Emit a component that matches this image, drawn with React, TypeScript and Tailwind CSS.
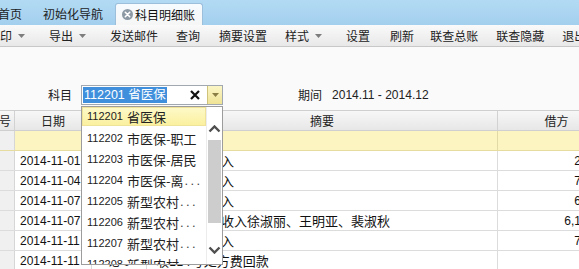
import React from "react";

const toolItems: { t: string; ml: string; arrow?: boolean }[] = [
  { t: "打印", ml: "ml-[-12px]", arrow: true },
  { t: "导出", ml: "ml-[24px]", arrow: true },
  { t: "发送邮件", ml: "ml-[24px]" },
  { t: "查询", ml: "ml-[18px]" },
  { t: "摘要设置", ml: "ml-[19px]" },
  { t: "样式", ml: "ml-[18px]", arrow: true },
  { t: "设置", ml: "ml-[24px]" },
  { t: "刷新", ml: "ml-[20px]" },
  { t: "联查总账", ml: "ml-[16px]" },
  { t: "联查隐藏", ml: "ml-[18px]" },
  { t: "退出", ml: "ml-[18px]" },
];

const listItems: { code: string; name: string; dots?: boolean }[] = [
  { code: "112201", name: "省医保" },
  { code: "112202", name: "市医保-职工" },
  { code: "112203", name: "市医保-居民" },
  { code: "112204", name: "市医保-离", dots: true },
  { code: "112205", name: "新型农村", dots: true },
  { code: "112206", name: "新型农村", dots: true },
  { code: "112207", name: "新型农村", dots: true },
  { code: "112208", name: "新型农村", dots: true },
];

const rows: { date: string; no: string; text: string; amt: string }[] = [
  { date: "2014-11-01", no: "记-1", text: "收到医保收入", amt: "210.00" },
  { date: "2014-11-04", no: "记-3", text: "收到医保收入", amt: "750.00" },
  { date: "2014-11-07", no: "记-5", text: "收到医保收入", amt: "630.00" },
  { date: "2014-11-07", no: "记-6", text: "省医保统筹收入徐淑丽、王明亚、裴淑秋", amt: "6,120.00" },
  { date: "2014-11-11", no: "记-8", text: "收到医保收入", amt: "720.00" },
  { date: "2014-11-11", no: "记-9", text: "收114号处方费回款", amt: "" },
];

function Caret() {
  return (
    <svg width="7" height="4" viewBox="0 0 7 4" className="ml-[6px] shrink-0">
      <path d="M0 0h7L3.5 4z" fill="#7d7d7d" />
    </svg>
  );
}

function Chevron({ down }: { down?: boolean }) {
  return (
    <svg width="13" height="8" viewBox="0 0 13 8" className="block mx-auto">
      <polyline
        points={down ? "1.5,1.5 6.5,6.5 11.5,1.5" : "1.5,6.5 6.5,1.5 11.5,6.5"}
        fill="none"
        stroke="#4f4f4f"
        strokeWidth="2.4"
        strokeLinejoin="miter"
      />
    </svg>
  );
}

export default function App() {
  return (
    <div className="w-[579px] h-[269px] overflow-hidden bg-[#fafafa] font-['Noto_Sans_CJK_SC',sans-serif] text-[#222]">
      {/* Tab bar */}
      <div className="h-[25px] bg-gradient-to-b from-[#b2daf4] to-[#a3cfee] flex items-end text-[12px] leading-none whitespace-nowrap">
        <div className="ml-[-2px] h-[22px] flex items-center text-[#1c1c1c]">首页</div>
        <div className="ml-[21px] h-[22px] flex items-center text-[#1c1c1c]">初始化导航</div>
        <div className="ml-[12px] w-[88px] h-[22px] rounded-t-[3px] border border-b-0 border-[#9cbfdb] bg-gradient-to-b from-[#f6fbfe] to-[#f6f6f6] flex items-center pl-[6px]">
          <svg width="11" height="11" viewBox="0 0 11 11" className="shrink-0">
            <circle cx="5.5" cy="5.5" r="5.5" fill="#8c99a5" />
            <path d="M3.3 3.3l4.4 4.4M7.7 3.3l-4.4 4.4" stroke="#fff" strokeWidth="1.6" strokeLinecap="round" />
          </svg>
          <span className="ml-[2px] text-[#111]">科目明细账</span>
        </div>
      </div>

      {/* Toolbar */}
      <div className="h-[22px] border-b border-[#c8c8c8] bg-gradient-to-b from-[#fafafa] to-[#e8e8e8] flex items-center text-[12px] leading-none whitespace-nowrap">
        {toolItems.map((it) => (
          <div key={it.t} className={`${it.ml} flex items-center shrink-0`}>
            <span>{it.t}</span>
            {it.arrow && <Caret />}
          </div>
        ))}
      </div>

      {/* Filter area */}
      <div className="h-[63px] pt-[38px] pl-[48px] flex items-start">
        <div className="flex items-center h-[20px] text-[12px] leading-none whitespace-nowrap">
          <span>科目</span>
          <div className="relative ml-[9px] z-10">
            <div className="w-[142px] h-[20px] border border-[#a2a8b0] bg-white flex items-center">
              <span className="ml-[1px] h-[16px] leading-[16px] px-[1px] bg-[#3f8fdc] text-white text-[12.5px] font-['Liberation_Sans','Noto_Sans_CJK_SC',sans-serif]">
                112201 省医保
              </span>
              <svg width="10" height="10" viewBox="0 0 10 10" className="ml-auto mr-[7px] shrink-0">
                <path d="M1 1l8 8M9 1l-8 8" stroke="#111" strokeWidth="2.2" />
              </svg>
              <div className="w-[15px] h-[18px] border-l border-[#cfc27a] bg-gradient-to-b from-[#fbf6c6] to-[#efe395] flex items-center justify-center shrink-0">
                <svg width="7" height="4" viewBox="0 0 7 4">
                  <path d="M0 0h7L3.5 4z" fill="#8a7d45" />
                </svg>
              </div>
            </div>
            {/* Dropdown list */}
            <div className="absolute left-0 top-[21px] w-[142px] h-[159px] border border-[#9c9c9c] bg-white flex overflow-hidden">
              <div className="w-[124px] shrink-0 flex flex-col overflow-hidden">
                {listItems.map((it, i) => (
                  <div
                    key={it.code}
                    className={
                      i === 0
                        ? "h-[19px] mb-[2px] shrink-0 flex items-center pl-[4px] bg-gradient-to-b from-[#fdf9c8] to-[#fbf09e] border border-[#efe39a]"
                        : "h-[21px] shrink-0 flex items-center pl-[5px]"
                    }
                  >
                    <span className="text-[11px] font-['Liberation_Sans',sans-serif] text-[#222]">{it.code}</span>
                    <span className="ml-[4px] text-[13px] text-[#222]">{it.name}</span>
                    {it.dots && (
                      <span className="ml-[1px] text-[13px] tracking-[2.4px] font-['Liberation_Sans',sans-serif] text-[#444]">...</span>
                    )}
                  </div>
                ))}
              </div>
              <div className="w-[16px] shrink-0 border-l border-[#ececec] flex flex-col">
                <div className="h-[33px] pt-[18px] shrink-0">
                  <Chevron />
                </div>
                <div className="h-[83px] mx-[1px] bg-[#cdcdcd] shrink-0" />
                <div className="pt-[23px]">
                  <Chevron down />
                </div>
              </div>
            </div>
          </div>
          <span className="ml-[75px]">期间</span>
          <span className="ml-[10px] font-['Liberation_Sans',sans-serif] text-[12px] text-[#222]">2014.11 - 2014.12</span>
        </div>
      </div>

      {/* Table */}
      <div className="w-[616px] text-[12px] leading-none whitespace-nowrap">
        {/* Header */}
        <div className="h-[21px] flex border-t border-b border-[#cfcfcf] bg-gradient-to-b from-[#f7f7f7] to-[#e7e7e7]">
          <div className="w-[15px] shrink-0 border-r border-[#d2d2d2] flex items-center justify-end pr-[3px] overflow-hidden">
            <span className="shrink-0">序号</span>
          </div>
          <div className="w-[77px] shrink-0 border-r border-[#d2d2d2] flex items-center justify-center">日期</div>
          <div className="w-[55px] shrink-0 border-r border-[#d2d2d2] flex items-center justify-center">凭证号</div>
          <div className="w-[351px] shrink-0 border-r border-[#d2d2d2] flex items-center justify-center">摘要</div>
          <div className="w-[118px] shrink-0 border-r border-[#d2d2d2] flex items-center justify-center">借方</div>
        </div>
        {/* Yellow row */}
        <div className="h-[20px] flex border-b border-[#e6dca0]">
          <div className="w-[15px] shrink-0 border-r border-[#d6d6d6] bg-[#f0f0f0]" />
          <div className="w-[77px] shrink-0 border-r border-[#e2d9a6] bg-[#fcf4c1]" />
          <div className="w-[55px] shrink-0 border-r border-[#e2d9a6] bg-[#fcf4c1]" />
          <div className="w-[351px] shrink-0 border-r border-[#e2d9a6] bg-[#fcf4c1]" />
          <div className="w-[118px] shrink-0 border-r border-[#e2d9a6] bg-[#fcf4c1]" />
        </div>
        {rows.map((r, i) => (
          <div key={i} className="h-[20px] flex border-b border-[#dcdcdc] bg-white">
            <div className="w-[15px] shrink-0 border-r border-[#d6d6d6] bg-[#f0f0f0]" />
            <div className="w-[77px] shrink-0 border-r border-[#dcdcdc] flex items-center pl-[5px] font-['Liberation_Sans',sans-serif] text-[#111]">
              {r.date}
            </div>
            <div className="w-[55px] shrink-0 border-r border-[#dcdcdc] flex items-center justify-center">{r.no}</div>
            <div className="w-[351px] shrink-0 border-r border-[#dcdcdc] flex items-center pl-[9px] text-[13px] text-[#111] overflow-hidden">
              {r.text}
            </div>
            <div className="w-[118px] shrink-0 border-r border-[#dcdcdc] flex items-center justify-end pr-[4px] font-['Liberation_Sans',sans-serif] text-[#111]">
              {r.amt}
            </div>
          </div>
        ))}
      </div>
    </div>
  );
}
